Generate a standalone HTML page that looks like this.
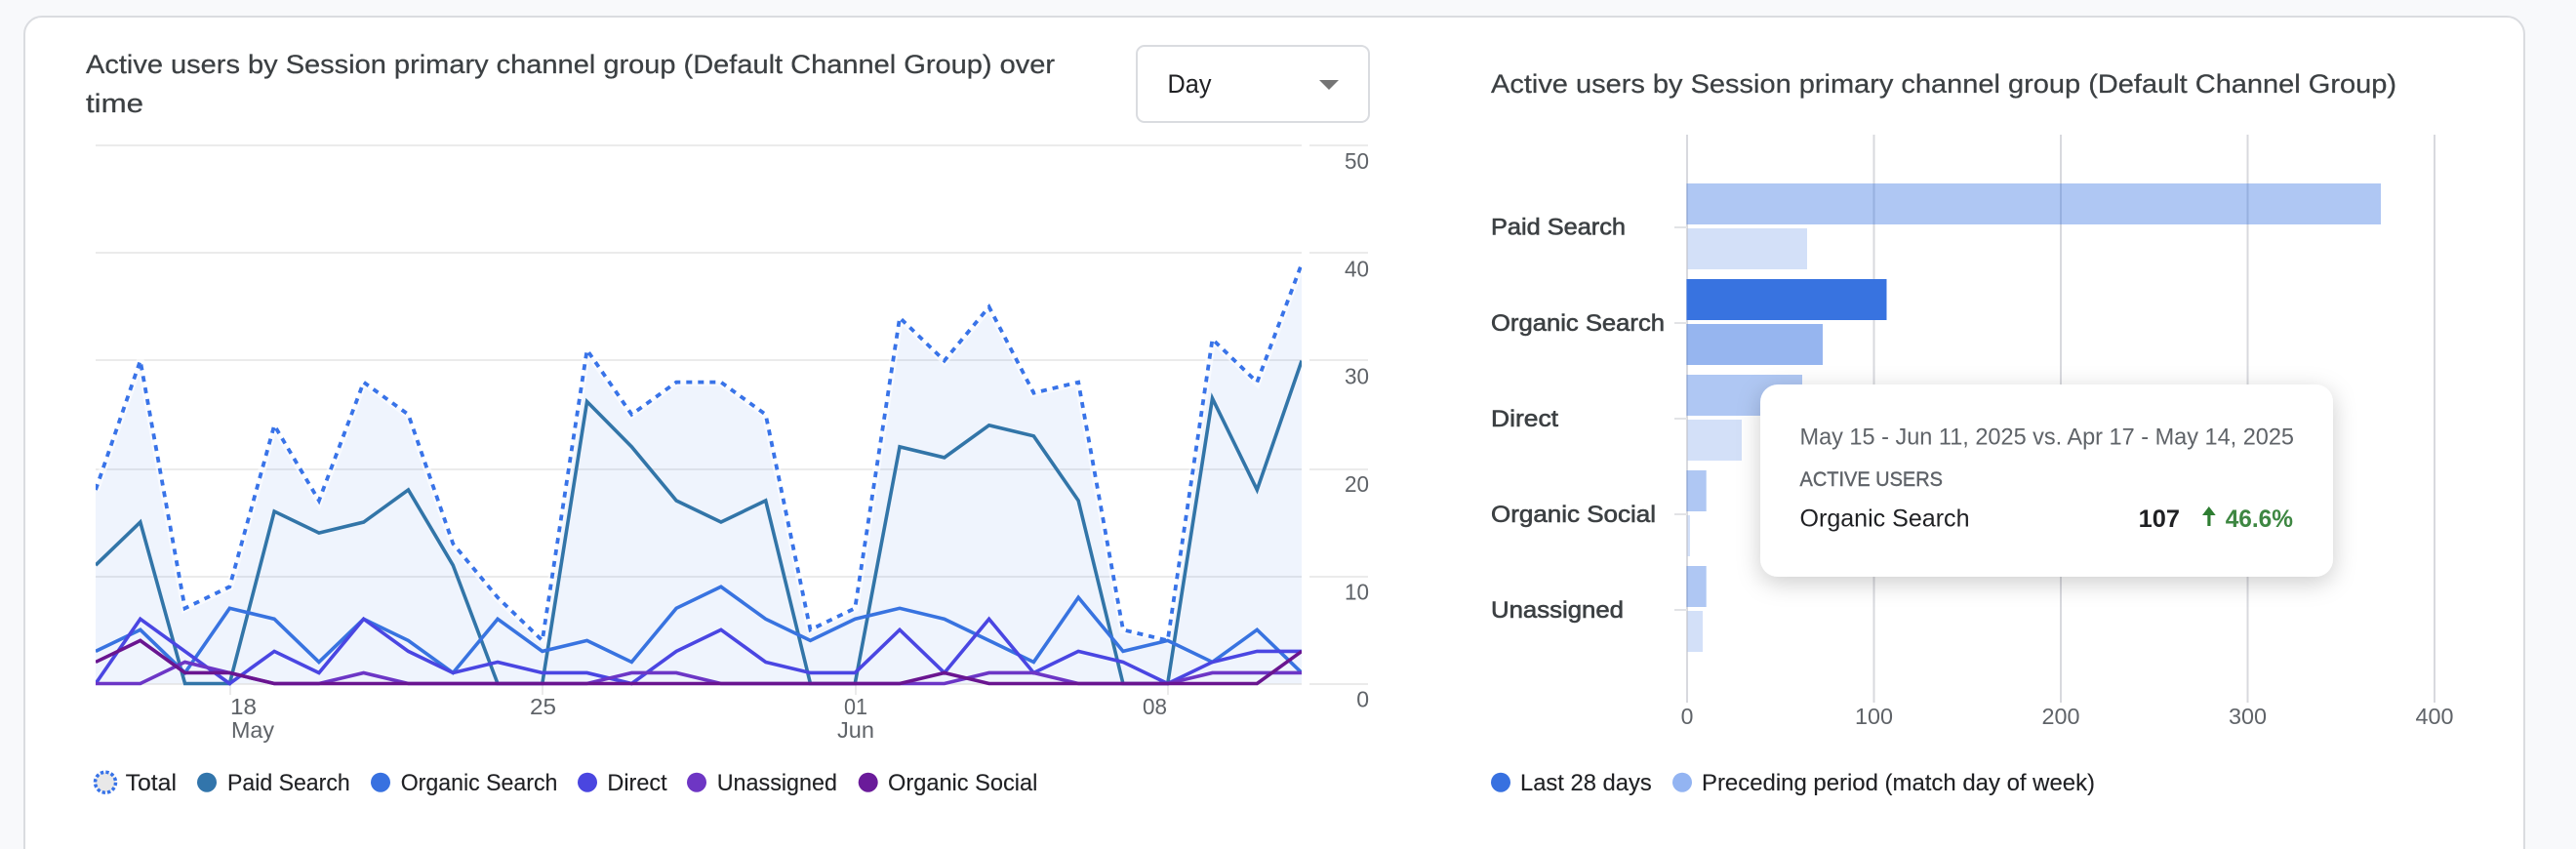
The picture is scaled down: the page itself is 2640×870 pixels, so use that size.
<!DOCTYPE html>
<html><head><meta charset="utf-8"><style>
html,body{margin:0;padding:0;width:2640px;height:870px;overflow:hidden;background:#f8f9fb}
svg{display:block}
text{font-family:"Liberation Sans",Arial,sans-serif}
.t{font-size:27px;fill:#3c4043;stroke:#3c4043;stroke-width:.25px}
.a{font-size:23px;fill:#5f6368}
.l{font-size:24px;fill:#202124;stroke:#202124;stroke-width:.12px}
.c{font-size:24px;fill:#3c4043;stroke:#3c4043;stroke-width:.6px}
</style></head><body>
<svg width="2640" height="870" viewBox="0 0 2640 870" xmlns="http://www.w3.org/2000/svg">
<defs>
<filter id="sh" x="-15%" y="-30%" width="130%" height="170%"><feDropShadow dx="0" dy="6" stdDeviation="12" flood-color="#000" flood-opacity=".2"/></filter>
<clipPath id="plot"><rect x="98" y="140" width="1236" height="564"/></clipPath>
</defs>
<path d="M25 870V35A18 18 0 0 1 43 17H2569A18 18 0 0 1 2587 35V870Z" fill="#fff"/>
<path d="M25 870V35A18 18 0 0 1 43 17H2569A18 18 0 0 1 2587 35V870" fill="none" stroke="#dadce0" stroke-width="2"/>

<!-- titles -->
<text class="t" x="88" y="75" textLength="993" lengthAdjust="spacingAndGlyphs">Active users by Session primary channel group (Default Channel Group) over</text>
<text class="t" x="88" y="115" textLength="59" lengthAdjust="spacingAndGlyphs">time</text>
<text class="t" x="1528" y="95" textLength="928" lengthAdjust="spacingAndGlyphs">Active users by Session primary channel group (Default Channel Group)</text>

<!-- dropdown -->
<rect x="1165" y="47" width="238" height="78" rx="8" fill="#fff" stroke="#dadce0" stroke-width="2"/>
<text x="1196.5" y="95" font-size="27" fill="#202124" textLength="45" lengthAdjust="spacingAndGlyphs">Day</text>
<path d="M1352 82h20l-10 10z" fill="#757575"/>

<!-- left chart grid -->
<g fill="#ebebeb">
<rect x="98" y="148" width="1236" height="2"/><rect x="1342" y="148" width="60" height="2"/>
<rect x="98" y="258" width="1236" height="2"/><rect x="1342" y="258" width="60" height="2"/>
<rect x="98" y="368" width="1236" height="2"/><rect x="1342" y="368" width="60" height="2"/>
<rect x="98" y="480" width="1236" height="2"/><rect x="1342" y="480" width="60" height="2"/>
<rect x="98" y="590" width="1236" height="2"/><rect x="1342" y="590" width="60" height="2"/>
<rect x="98" y="700" width="1236" height="2"/><rect x="1342" y="700" width="60" height="2"/>
<rect x="235" y="702" width="2" height="10"/><rect x="555" y="702" width="2" height="10"/><rect x="876" y="702" width="2" height="10"/><rect x="1196" y="702" width="2" height="10"/>
</g>
<g class="a" text-anchor="end">
<text x="1403" y="173" textLength="25" lengthAdjust="spacingAndGlyphs">50</text><text x="1403" y="283.3" textLength="25" lengthAdjust="spacingAndGlyphs">40</text><text x="1403" y="393.6" textLength="25" lengthAdjust="spacingAndGlyphs">30</text><text x="1403" y="504" textLength="25" lengthAdjust="spacingAndGlyphs">20</text><text x="1403" y="614.3" textLength="25" lengthAdjust="spacingAndGlyphs">10</text><text x="1403" y="724.6">0</text>
</g>
<g class="a">
<text x="236" y="732" textLength="27" lengthAdjust="spacingAndGlyphs">18</text>
<text x="237" y="756" textLength="44" lengthAdjust="spacingAndGlyphs">May</text>
<text x="543" y="732" textLength="27" lengthAdjust="spacingAndGlyphs">25</text>
<text x="865" y="732" textLength="24" lengthAdjust="spacingAndGlyphs">01</text>
<text x="858" y="756" textLength="38" lengthAdjust="spacingAndGlyphs">Jun</text>
<text x="1171" y="732" textLength="25" lengthAdjust="spacingAndGlyphs">08</text>
</g>

<!-- left chart series -->
<g clip-path="url(#plot)">
<g transform="translate(98 700.5) scale(45.78 -11.03)" fill="none" stroke-linejoin="miter" stroke-miterlimit="10">
<polygon fill="#3873e0" fill-opacity=".08" points="0,18 1,30 2,7 3,9 4,24 5,17 6,28 7,25 8,13 9,8 10,4 11,31 12,25 13,28 14,28 15,25 16,5 17,7 18,34 19,30 20,35 21,27 22,28 23,5 24,4 25,32 26,28 27,39 27,0 0,0"/>
<polyline vector-effect="non-scaling-stroke" stroke="#fff" stroke-opacity=".55" stroke-width="8" points="0,18 1,30 2,7 3,9 4,24 5,17 6,28 7,25 8,13 9,8 10,4 11,31 12,25 13,28 14,28 15,25 16,5 17,7 18,34 19,30 20,35 21,27 22,28 23,5 24,4 25,32 26,28 27,39"/>
<polyline vector-effect="non-scaling-stroke" stroke="#3873e8" stroke-width="3.8" stroke-dasharray="6 6" points="0,18 1,30 2,7 3,9 4,24 5,17 6,28 7,25 8,13 9,8 10,4 11,31 12,25 13,28 14,28 15,25 16,5 17,7 18,34 19,30 20,35 21,27 22,28 23,5 24,4 25,32 26,28 27,39"/>
<polyline vector-effect="non-scaling-stroke" stroke="#3275a8" stroke-width="3.6" points="0,11 1,15 2,0 3,0 4,16 5,14 6,15 7,18 8,11 9,0 10,0 11,26.2 12,22 13,17 14,15 15,17 16,0 17,0 18,22 19,21 20,24 21,23 22,17 23,0 24,0 25,26.5 26,18 27,30"/>
<polyline vector-effect="non-scaling-stroke" stroke="#3873e0" stroke-width="3.6" points="0,3 1,5 2,1 3,7 4,6 5,2 6,6 7,4 8,1 9,6 10,3 11,4 12,2 13,7 14,9 15,6 16,4 17,6 18,7 19,6 20,4 21,2 22,8 23,3 24,4 25,2 26,5 27,1"/>
<polyline vector-effect="non-scaling-stroke" stroke="#4a46e2" stroke-width="3.6" points="0,0 1,6 2,3 3,0 4,3 5,1 6,6 7,3 8,1 9,2 10,1 11,1 12,0 13,3 14,5 15,2 16,1 17,1 18,5 19,1 20,6 21,1 22,3 23,2 24,0 25,2 26,3 27,3"/>
<polyline vector-effect="non-scaling-stroke" stroke="#6c36c6" stroke-width="3.6" points="0,0 1,0 2,2 3,1 4,0 5,0 6,1 7,0 8,0 9,0 10,0 11,0 12,1 13,1 14,0 15,0 16,0 17,0 18,0 19,0 20,1 21,1 22,0 23,0 24,0 25,1 26,1 27,1"/>
<polyline vector-effect="non-scaling-stroke" stroke="#6a1590" stroke-width="3.6" points="0,2 1,4 2,1 3,1 4,0 5,0 6,0 7,0 8,0 9,0 10,0 11,0 12,0 13,0 14,0 15,0 16,0 17,0 18,0 19,1 20,0 21,0 22,0 23,0 24,0 25,0 26,0 27,3"/>
</g>
</g>

<!-- left legend -->
<circle cx="108" cy="801.7" r="10.5" fill="#e8e8e8" stroke="#3873e8" stroke-width="3.5" stroke-dasharray="3.3 2.2"/>
<circle cx="212" cy="801.7" r="10" fill="#3275ab"/>
<circle cx="390" cy="801.7" r="10" fill="#3871e0"/>
<circle cx="602" cy="801.7" r="10" fill="#4a46e0"/>
<circle cx="714" cy="801.7" r="10" fill="#6e36c4"/>
<circle cx="889.7" cy="801.7" r="10" fill="#6a1b9a"/>
<g class="l">
<text x="128.6" y="810" textLength="52.4" lengthAdjust="spacingAndGlyphs">Total</text>
<text x="233" y="810" textLength="125.7" lengthAdjust="spacingAndGlyphs">Paid Search</text>
<text x="410.7" y="810" textLength="160.7" lengthAdjust="spacingAndGlyphs">Organic Search</text>
<text x="622.4" y="810" textLength="61.3" lengthAdjust="spacingAndGlyphs">Direct</text>
<text x="734.7" y="810" textLength="123.3" lengthAdjust="spacingAndGlyphs">Unassigned</text>
<text x="910" y="810" textLength="153.4" lengthAdjust="spacingAndGlyphs">Organic Social</text>
</g>

<!-- right chart grid -->
<g fill="#d8d9de">
<rect x="1728" y="138" width="2" height="582"/>
<rect x="1919.5" y="138" width="2" height="582"/>
<rect x="2111" y="138" width="2" height="582"/>
<rect x="2302.5" y="138" width="2" height="582"/>
<rect x="2494" y="138" width="2" height="582"/>
</g>
<g fill="#e2e3e6">
<rect x="1716" y="232" width="13" height="2"/>
<rect x="1716" y="330" width="13" height="2"/>
<rect x="1716" y="428" width="13" height="2"/>
<rect x="1716" y="526" width="13" height="2"/>
<rect x="1716" y="624" width="13" height="2"/>
</g>
<!-- bars -->
<g>
<rect x="1728.5" y="188" width="711.5" height="42" fill="#3873e0" fill-opacity=".4"/>
<rect x="1729.5" y="234" width="122.5" height="42" fill="#3873e0" fill-opacity=".22"/>
<rect x="1728.5" y="286" width="205" height="42" fill="#3873e0"/>
<rect x="1728.5" y="332" width="139.5" height="42" fill="#3873e0" fill-opacity=".53"/>
<rect x="1728.5" y="384" width="118.5" height="42" fill="#3873e0" fill-opacity=".4"/>
<rect x="1729.5" y="430" width="55.5" height="42" fill="#3873e0" fill-opacity=".22"/>
<rect x="1728.5" y="482" width="20.2" height="42" fill="#3873e0" fill-opacity=".4"/>
<rect x="1729.5" y="528" width="2.5" height="42" fill="#3873e0" fill-opacity=".22"/>
<rect x="1728.5" y="580" width="20.2" height="42" fill="#3873e0" fill-opacity=".4"/>
<rect x="1729.5" y="626" width="15.5" height="42" fill="#3873e0" fill-opacity=".22"/>
</g>
<g class="c">
<text x="1528" y="240.7" textLength="138" lengthAdjust="spacingAndGlyphs">Paid Search</text>
<text x="1528" y="339.2" textLength="178" lengthAdjust="spacingAndGlyphs">Organic Search</text>
<text x="1528" y="437" textLength="69" lengthAdjust="spacingAndGlyphs">Direct</text>
<text x="1528" y="535" textLength="169" lengthAdjust="spacingAndGlyphs">Organic Social</text>
<text x="1528" y="633" textLength="136" lengthAdjust="spacingAndGlyphs">Unassigned</text>
</g>
<g class="a" text-anchor="middle">
<text x="1729" y="742">0</text><text x="1920.5" y="742" textLength="39" lengthAdjust="spacingAndGlyphs">100</text><text x="2112" y="742" textLength="39" lengthAdjust="spacingAndGlyphs">200</text><text x="2303.5" y="742" textLength="39" lengthAdjust="spacingAndGlyphs">300</text><text x="2495" y="742" textLength="39" lengthAdjust="spacingAndGlyphs">400</text>
</g>

<!-- right legend -->
<circle cx="1538" cy="801.7" r="10" fill="#3871e0"/>
<circle cx="1724" cy="801.7" r="10" fill="#93b4f2"/>
<g class="l">
<text x="1558" y="810" textLength="134.7" lengthAdjust="spacingAndGlyphs">Last 28 days</text>
<text x="1744" y="810" textLength="403" lengthAdjust="spacingAndGlyphs">Preceding period (match day of week)</text>
</g>

<!-- tooltip -->
<rect x="1804" y="394" width="587" height="197" rx="18" fill="#fff" filter="url(#sh)"/>
<text x="1844.5" y="455.7" font-size="24" fill="#5f6368" textLength="506.5" lengthAdjust="spacingAndGlyphs">May 15 - Jun 11, 2025 vs. Apr 17 - May 14, 2025</text>
<text x="1844.5" y="498" font-size="21.5" fill="#5f6368" stroke="#5f6368" stroke-width=".4" textLength="146.5" lengthAdjust="spacingAndGlyphs">ACTIVE USERS</text>
<text x="1844.5" y="539.5" font-size="25" fill="#202124" textLength="174" lengthAdjust="spacingAndGlyphs">Organic Search</text>
<text x="2191.7" y="540" font-size="25" font-weight="700" fill="#202124" textLength="42.3" lengthAdjust="spacingAndGlyphs">107</text>
<path d="M2262.3 539V528H2257L2263.8 519L2270.7 528H2265.5V539Z" fill="#2e7d32"/>
<text x="2280.7" y="540" font-size="25" font-weight="700" fill="#2e7d32" fill-opacity=".92" textLength="69.3" lengthAdjust="spacingAndGlyphs">46.6%</text>
</svg>
</body></html>
